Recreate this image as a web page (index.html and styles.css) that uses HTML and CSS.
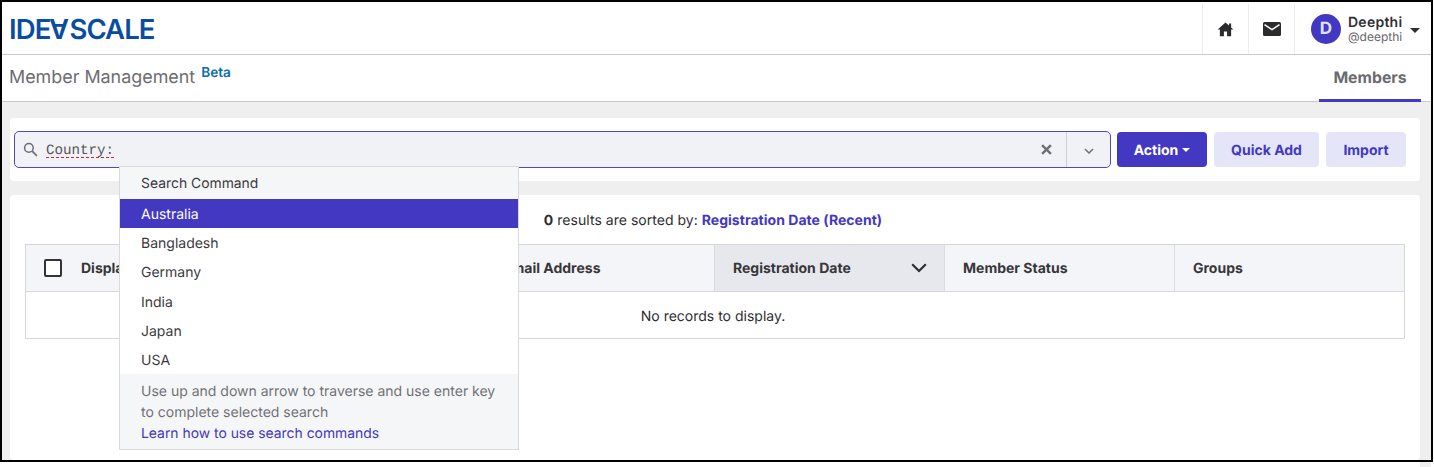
FILE: index.html
```html
<!DOCTYPE html>
<html lang="en">
<head>
<meta charset="utf-8">
<title>Member Management</title>
<link rel="stylesheet" href="styles.css">
</head>
<body>
<div class="frame">
  <header class="topbar">
    <div class="logo">IDE<span class="flip">A</span>SCALE</div>
    <nav class="topnav">
      <div class="navcell">
        <svg class="homeicon" viewBox="0 0 18 16"><path d="M9 .5 0.6 8h2.4v7.2h4.3v-5h3.4v5H15V8h2.4L15 5.8V1.6h-2.2v2.2z" fill="#2b2b2e"/></svg>
      </div>
      <div class="navcell">
        <svg class="mailicon" viewBox="0 0 18 14"><rect width="18" height="14" rx="1.6" fill="#2b2b2e"/><path d="M1.5 2.6 9 7.6l7.5-5" fill="none" stroke="#fff" stroke-width="1.4"/></svg>
      </div>
      <div class="usercell">
        <div class="avatar">D</div>
        <div class="username">
          <div class="name">Deepthi</div>
          <div class="handle">@deepthi</div>
        </div>
        <span class="usercaret"></span>
      </div>
    </nav>
  </header>
  <div class="subbar">
    <div class="pagetitle">Member Management<sup class="beta">Beta</sup></div>
    <div class="tab">Members</div>
  </div>
  <main class="content">
    <section class="card searchcard">
      <div class="searchbox">
        <svg class="searchicon" viewBox="0 0 16 16"><circle cx="6.3" cy="6.3" r="4.6" fill="none" stroke="#6b6d73" stroke-width="1.6"/><path d="m9.8 9.8 5 5" stroke="#6b6d73" stroke-width="1.8"/></svg>
        <span class="command">Country:</span>
        <span class="grow"></span>
        <svg class="clearicon" viewBox="0 0 10 10"><path d="m1 1 8 8M9 1 1 9" stroke="#6f7075" stroke-width="2.2"/></svg>
        <span class="chevcell"><svg class="chevsmall" viewBox="0 0 10 6"><path d="m1 1 4 4 4-4" fill="none" stroke="#6f7075" stroke-width="1.5"/></svg></span>
      </div>
      <button class="btn primary">Action<span class="btncaret"></span></button>
      <button class="btn soft quick">Quick Add</button>
      <button class="btn soft import">Import</button>
    </section>
    <section class="card listcard">
      <p class="summary"><b>0</b> results are sorted by: <a class="sortlink">Registration Date (Recent)</a></p>
      <div class="table">
        <div class="thead">
          <div class="th th-name"><span class="checkbox"></span><span>Display Name</span></div>
          <div class="th th-col">Email Address</div>
          <div class="th th-col sorted">Registration Date<svg class="chevsort" viewBox="0 0 16 10"><path d="m1.2 1.2 6.8 6.8 6.8-6.8" fill="none" stroke="#2e2e31" stroke-width="2.2"/></svg></div>
          <div class="th th-col">Member Status</div>
          <div class="th th-col">Groups</div>
        </div>
        <div class="tbody">No records to display.</div>
      </div>
    </section>
  </main>
  <div class="dropdown">
    <div class="ddhead">Search Command</div>
    <div class="dditem active">Australia</div>
    <div class="dditem">Bangladesh</div>
    <div class="dditem">Germany</div>
    <div class="dditem">India</div>
    <div class="dditem">Japan</div>
    <div class="dditem">USA</div>
    <div class="ddfoot">Use up and down arrow to traverse and use enter key to complete selected search<br><a class="ddlink">Learn how to use search commands</a></div>
  </div>
</div>
<div class="tail"></div>
</body>
</html>
```

FILE: styles.css
```css
* { box-sizing: border-box; }
html, body { margin: 0; padding: 0; background: #fff; }
body { font-family: Inter, "Liberation Sans", sans-serif; font-size: 14px; color: #2e2e31; text-rendering: geometricPrecision; }

.frame {
  position: relative;
  width: 1433px;
  height: 462px;
  border: 2px solid #000;
  overflow: hidden;
  display: flex;
  flex-direction: column;
  background: #fff;
}
.tail { width: 11px; height: 5px; margin-left: 1420px; background: #efefef; }

.topbar {
  height: 53px;
  flex: none;
  display: flex;
  justify-content: space-between;
  border-bottom: 1px solid #c9c9c9;
}
.logo {
  margin: 11px 0 0 7px;
  font-size: 27.5px;
  line-height: 33px;
  font-weight: 600;
  color: #0b4ca3;
  letter-spacing: -0.92px;
}
.flip { display: inline-block; transform: rotate(180deg); line-height: 20px; }
.topnav { display: flex; }
.navcell {
  width: 46px;
  margin-top: 2px;
  display: flex;
  align-items: center;
  justify-content: center;
  border-left: 1px solid #ececec;
}
.homeicon { width: 17px; height: 15px; }
.mailicon { width: 18px; height: 14px; }
.usercell {
  width: 137px;
  margin-top: 2px;
  display: flex;
  align-items: center;
  padding-left: 16px;
  border-left: 1px solid #ececec;
}
.avatar {
  width: 30px;
  height: 30px;
  border-radius: 50%;
  background: #4338c2;
  color: #dfe1fb;
  font-weight: 700;
  font-size: 17px;
  display: flex;
  align-items: center;
  justify-content: center;
}
.username { margin-left: 7px; margin-top: -1px; }
.name { font-size: 14px; font-weight: 600; line-height: 15px; letter-spacing: .25px; color: #303033; }
.handle { font-size: 12px; line-height: 13px; color: #66676b; }
.usercaret {
  margin-left: 8px;
  margin-top: 2px;
  border-left: 5px solid transparent;
  border-right: 5px solid transparent;
  border-top: 5px solid #2e2e31;
}

.subbar {
  height: 47px;
  flex: none;
  display: flex;
  justify-content: space-between;
  border-bottom: 1px solid #c9c9c9;
  padding-left: 7px;
}
.pagetitle { font-size: 17.9px; line-height: 46px; color: #6c6d71; }
.beta {
  font-size: 13.6px;
  font-weight: 600;
  color: #0a6db0;
  margin-left: 6px;
  line-height: 0;
  position: relative;
  top: 0;
  vertical-align: 6px;
  letter-spacing: 0;
}
.tab {
  width: 102px;
  margin-right: 10px;
  text-align: center;
  font-size: 15.8px;
  font-weight: 700;
  line-height: 46px;
  color: #6a6b70;
  border-bottom: 3px solid #4338c2;
  height: 47px;
}

.content {
  flex: 1;
  min-height: 0;
  background: #efefef;
  padding: 16px 11px 0 8px;
  display: flex;
  flex-direction: column;
  gap: 14px;
}
.card { background: #fff; border-radius: 4px; }
.searchcard {
  height: 63px;
  flex: none;
  display: flex;
  align-items: center;
  padding: 0 14px 0 4px;
}
.searchbox {
  width: 1097px;
  height: 37px;
  display: flex;
  align-items: center;
  background: #f1f2f6;
  border: 1px solid #4f46c8;
  border-radius: 5px;
  padding-left: 8px;
}
.searchicon { width: 15px; height: 15px; }
.command {
  margin-left: 8px;
  padding-top: 3px;
  font-family: "Liberation Mono", monospace;
  font-size: 14.2px;
  color: #55565a;
  text-decoration: underline dashed #d8232a 1px;
  text-underline-offset: 3px;
}
.grow { flex: 1; }
.clearicon { width: 11px; height: 11px; margin-right: 14px; }
.chevcell {
  width: 44px;
  height: 35px;
  border-left: 1px solid #cfcfd3;
  display: flex;
  align-items: center;
  justify-content: center;
}
.chevsmall { width: 10px; height: 6px; margin-top: 3px; }
.btn {
  height: 35px;
  border: 0;
  border-radius: 4px;
  font-family: inherit;
  font-size: 14px;
  font-weight: 700;
  padding: 1px 0 0;
  text-rendering: geometricPrecision;
}
.primary {
  width: 90px;
  margin-left: 6px;
  background: #4338c2;
  color: #fff;
}
.btncaret {
  display: inline-block;
  margin-left: 4px;
  vertical-align: 3px;
  border-left: 4px solid transparent;
  border-right: 4px solid transparent;
  border-top: 4px solid #fff;
}
.soft { background: #e4e5f6; color: #4338c2; }
.quick { width: 105px; margin-left: 7px; }
.import { width: 80px; margin-left: 7px; }

.listcard { flex: 1; padding: 0 15px; position: relative; }
.summary {
  margin: 0;
  height: 49px;
  text-align: center;
  font-size: 14px;
  line-height: 52px;
  color: #2e2e31;
  padding-right: 4px;
  letter-spacing: .03px;
}
.sortlink { font-weight: 700; color: #4338c2; }
.table { width: 1380px; height: 95px; border: 1px solid #d6d6d6; }
.thead {
  height: 47px;
  display: flex;
  background: #f4f5f8;
  border-bottom: 1px solid #d9d9d9;
}
.th { font-size: 14px; font-weight: 700; color: #37373a; display: flex; align-items: center; }
.th-name { width: 458px; padding-left: 18px; gap: 19px; }
.th-col { width: 230px; padding-left: 18px; border-left: 1px solid #dcdcdc; }
.sorted { background: #e7e8ed; justify-content: space-between; padding-right: 17px; border-right: 0; }
.chevsort { width: 16px; height: 10px; }
.checkbox {
  width: 18px;
  height: 18px;
  border: 2px solid #333336;
  border-radius: 2px;
  background: #fff;
}
.tbody { height: 46px; text-align: center; line-height: 50px; font-size: 14px; color: #2e2e31; padding-right: 4px; }

.dropdown {
  position: absolute;
  left: 117px;
  top: 164px;
  width: 400px;
  height: 284px;
  background: #fff;
  border: 1px solid #dadada;
  font-size: 14px;
}
.ddhead { height: 32px; background: #f5f6f8; padding-left: 21px; line-height: 34px; font-size: 13.9px; color: #3a3a3d; }
.dditem { height: 29.2px; line-height: 31px; padding-left: 21px; color: #3a3a3d; }
.dditem.active { background: #4338c2; color: #fff; }
.ddfoot {
  height: 74.8px;
  background: #f5f6f8;
  padding: 7px 21px 0;
  line-height: 21px;
  color: #707176;
}
.ddlink { color: #4338c2; font-size: 13.9px; }
```
